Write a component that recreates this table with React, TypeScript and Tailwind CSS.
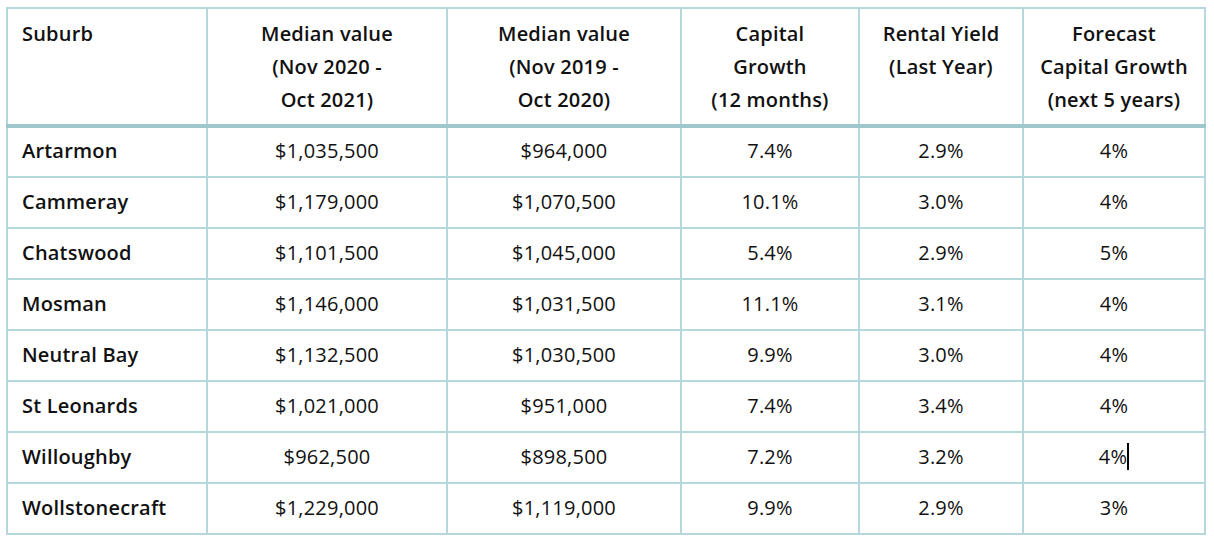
import React from "react";

const rows = [
  ["Artarmon", "$1,035,500", "$964,000", "7.4%", "2.9%", "4%"],
  ["Cammeray", "$1,179,000", "$1,070,500", "10.1%", "3.0%", "4%"],
  ["Chatswood", "$1,101,500", "$1,045,000", "5.4%", "2.9%", "5%"],
  ["Mosman", "$1,146,000", "$1,031,500", "11.1%", "3.1%", "4%"],
  ["Neutral Bay", "$1,132,500", "$1,030,500", "9.9%", "3.0%", "4%"],
  ["St Leonards", "$1,021,000", "$951,000", "7.4%", "3.4%", "4%"],
  ["Willoughby", "$962,500", "$898,500", "7.2%", "3.2%", "4%"],
  ["Wollstonecraft", "$1,229,000", "$1,119,000", "9.9%", "2.9%", "3%"],
];

export default function App() {
  return (
    <div
      className="w-[1214px] h-[543px] bg-white pl-[6px] pt-[7px]"
      style={{ fontFamily: "'Open Sans', Lato, sans-serif" }}
    >
      <table className="table-fixed border-collapse w-[1198px] text-[20px] tracking-[0.2px] text-[#111]">
        <colgroup>
          <col className="w-[200px]" />
          <col className="w-[240px]" />
          <col className="w-[234px]" />
          <col className="w-[178px]" />
          <col className="w-[164px]" />
          <col className="w-[182px]" />
        </colgroup>
        <thead>
          <tr className="h-[118px]">
            <th className="border-2 border-b-4 border-[#b6d7dc] border-b-[#9dc7cd] align-top text-left font-semibold leading-[33px] pt-[8px] pl-[14px]">
              Suburb
            </th>
            <th className="border-2 border-b-4 border-[#b6d7dc] border-b-[#9dc7cd] align-top text-center font-semibold leading-[33px] pt-[8px]">
              Median value
              <br />
              (Nov 2020 -
              <br />
              Oct 2021)
            </th>
            <th className="border-2 border-b-4 border-[#b6d7dc] border-b-[#9dc7cd] align-top text-center font-semibold leading-[33px] pt-[8px]">
              Median value
              <br />
              (Nov 2019 -
              <br />
              Oct 2020)
            </th>
            <th className="border-2 border-b-4 border-[#b6d7dc] border-b-[#9dc7cd] align-top text-center font-semibold leading-[33px] pt-[8px]">
              Capital
              <br />
              Growth
              <br />
              (12 months)
            </th>
            <th className="border-2 border-b-4 border-[#b6d7dc] border-b-[#9dc7cd] align-top text-center font-semibold leading-[33px] pt-[8px]">
              Rental Yield
              <br />
              (Last Year)
            </th>
            <th className="border-2 border-b-4 border-[#b6d7dc] border-b-[#9dc7cd] align-top text-center font-semibold leading-[33px] pt-[8px]">
              Forecast
              <br />
              Capital Growth
              <br />
              (next 5 years)
            </th>
          </tr>
        </thead>
        <tbody>
          {rows.map((r, i) => (
            <tr key={r[0]} className="h-[51px]">
              <td className="border-2 border-[#b6d7dc] pl-[14px] pb-[2px] font-semibold align-middle">
                {r[0]}
              </td>
              {r.slice(1).map((c, j) => (
                <td
                  key={j}
                  className="border-2 border-[#b6d7dc] pb-[2px] text-center align-middle"
                >
                  {c}
                  {i === 6 && j === 4 ? (
                    <span className="inline-block w-[2px] h-[27px] bg-black align-middle -mt-[3px]" />
                  ) : null}
                </td>
              ))}
            </tr>
          ))}
        </tbody>
      </table>
    </div>
  );
}
